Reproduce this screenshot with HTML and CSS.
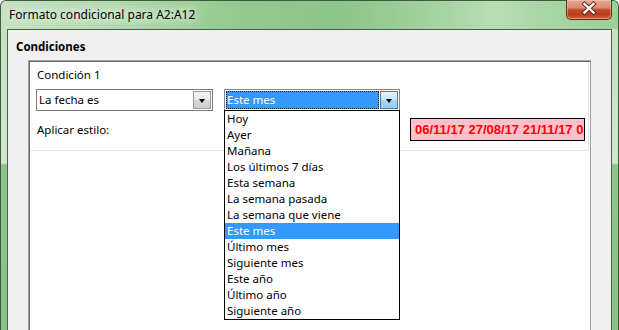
FILE: index.html
```html
<!DOCTYPE html>
<html lang="es">
<head>
<meta charset="utf-8">
<title>Formato condicional</title>
<link rel="stylesheet" href="styles.css">
</head>
<body>
<div class="window">
  <div class="titlebar">
    <span class="title">Formato condicional para A2:A12</span>
    <div class="close">
      <svg width="46" height="19" viewBox="0 0 46 19">
        <path d="M18.5 5 L27.5 13.5 M27.5 5 L18.5 13.5" stroke="#5a2418" stroke-width="4.2" stroke-linecap="square"/>
        <path d="M18.5 5 L27.5 13.5 M27.5 5 L18.5 13.5" stroke="#ffffff" stroke-width="2.4" stroke-linecap="square"/>
      </svg>
    </div>
  </div>
  <div class="client">
    <div class="section-title">Condiciones</div>
    <div class="pane">
      <div class="cond">
        <div class="cond-label">Condición 1</div>
        <div class="combo-row">
          <div class="combo">
            <span class="combo-text">La fecha es</span>
            <span class="combo-btn"><i class="arrow"></i></span>
          </div>
          <div class="combo combo-open">
            <span class="combo-text selected">Este mes</span>
            <span class="combo-btn hot"><i class="arrow"></i></span>
            <ul class="list">
              <li>Hoy</li>
              <li>Ayer</li>
              <li>Mañana</li>
              <li>Los últimos 7 días</li>
              <li>Esta semana</li>
              <li>La semana pasada</li>
              <li>La semana que viene</li>
              <li class="active">Este mes</li>
              <li>Último mes</li>
              <li>Siguiente mes</li>
              <li>Este año</li>
              <li>Último año</li>
              <li>Siguiente año</li>
            </ul>
          </div>
        </div>
        <div class="style-row">
          <span class="style-label">Aplicar estilo:</span>
          <div class="preview"><span class="preview-text">06/11/17 27/08/17 21/11/17 0</span></div>
        </div>
      </div>
    </div>
  </div>
</div>
</body>
</html>
```
FILE: styles.css
```css
html, body {
  margin: 0;
  padding: 0;
  width: 619px;
  height: 330px;
  overflow: hidden;
  background: #ffffff;
}

body {
  font-family: "Noto Sans", "Open Sans", sans-serif;
  font-size: 11.5px;
  color: #000;
}

.window {
  box-sizing: border-box;
  width: 619px;
  height: 330px;
  display: flex;
  flex-direction: column;
  border: 1px solid #3f5a3f;
  border-bottom: none;
  border-radius: 6px 6px 0 0;
  padding: 0 6px;
  background: linear-gradient(to bottom, #c2e1be 0, #cfe8cc 162px, #8bc688 164px, #88c485 100%);
}

.titlebar {
  height: 28px;
  margin: 0 -6px;
  padding: 0 6px;
  display: flex;
  align-items: flex-start;
  background: linear-gradient(90deg, #c4e2c0 0%, #b0d9ac 20%, #93c98f 38%, #8cc588 55%, #a0d09c 68%, #b8ddb4 80%, #a6d4a2 90%, #9ccf98 100%);
  border-radius: 6px 6px 0 0;
}

.title {
  padding: 6px 0 0 2px;
  line-height: 16px;
  font-size: 12px;
  color: #000;
  text-shadow: 0 0 6px #eaf5e8, 0 0 10px #eaf5e8, 0 0 14px #eaf5e8;
}

.close {
  margin-left: auto;
  margin-top: -1px;
  box-sizing: border-box;
  width: 46px;
  height: 20px;
  border: 1px solid #6b2a1c;
  border-top: none;
  border-radius: 0 0 5px 5px;
  background: linear-gradient(to bottom, #e9a996 0%, #dc8a72 40%, #c5492b 52%, #b93b1c 75%, #d3653f 100%);
  box-shadow: inset 0 0 0 1px rgba(255, 210, 190, 0.45);
}

.close svg {
  display: block;
  margin: -1px 0 0 -1px;
}

.client {
  flex: 1;
  display: flex;
  flex-direction: column;
  border: 1px solid #4b5e4b;
  border-bottom: none;
  background: #f0f0f0;
  min-height: 0;
}

.section-title {
  font-weight: bold;
  line-height: 16px;
  padding: 9px 0 0 8px;
  box-sizing: border-box;
  height: 30px;
}

.pane {
  flex: 1;
  margin: 0 20px;
  border-top: 1px solid #a0a0a0;
  border-left: 1px solid #a0a0a0;
  border-right: 1px solid #a0a0a0;
  padding: 1px 0 0 1px;
  background: #ffffff;
  box-shadow: inset 1px 1px 0 #696969;
}

.cond {
  box-sizing: border-box;
  height: 89px;
  margin-right: 1px;
  border-right: 1px solid #e3e3e3;
  border-bottom: 1px solid #e3e3e3;
  padding: 5px 0 0 6px;
}

.cond-label {
  line-height: 16px;
  padding-left: 1px;
}

.combo-row {
  display: flex;
  margin-top: 6px;
}

.combo {
  position: relative;
  box-sizing: border-box;
  width: 177px;
  height: 22px;
  border: 1px solid #7a7a7a;
  background: #fff;
  display: flex;
  align-items: center;
}

.combo-text {
  flex: 1;
  line-height: 16px;
  padding-left: 2px;
}

.combo-btn {
  box-sizing: border-box;
  width: 18px;
  height: 18px;
  margin-right: 1px;
  border: 1px solid #9a9a9a;
  background: linear-gradient(to bottom, #f4f4f4 0%, #e8e8e8 50%, #d8d8d8 51%, #cfcfcf 100%);
  display: flex;
  align-items: center;
  justify-content: center;
}

.arrow {
  width: 0;
  height: 0;
  border-left: 3.5px solid transparent;
  border-right: 3.5px solid transparent;
  border-top: 4px solid #000;
  margin-top: 1px;
}

.combo-open {
  width: 176px;
  margin-left: 11px;
  border-color: #6d8bab;
}

.combo-text.selected {
  margin: 0 1px 0 1px;
  height: 18px;
  box-sizing: border-box;
  background: #3399ff;
  color: #fff;
  padding-left: 1px;
  outline: 1px dotted #1a1a1a;
  outline-offset: -1px;
  line-height: 17px;
}

.combo-btn.hot {
  border-color: #3c7fb1;
  background: linear-gradient(to bottom, #e5f3fd 0%, #c7e5fb 50%, #a9d7f8 51%, #9ccbf0 100%);
}

.list {
  position: absolute;
  top: 100%;
  left: -1px;
  width: 176px;
  box-sizing: border-box;
  margin: 0;
  padding: 0;
  list-style: none;
  border: 1px solid #000;
  background: #fff;
  z-index: 5;
}

.list li {
  height: 16px;
  line-height: 16px;
  padding-left: 2px;
  white-space: nowrap;
}

.list li.active {
  background: #3399ff;
  color: #fff;
}

.style-row {
  display: flex;
  align-items: center;
  margin-top: 7px;
}

.style-label {
  padding-left: 1px;
  line-height: 16px;
}

.preview {
  margin-left: auto;
  margin-right: 3px;
  box-sizing: border-box;
  width: 175px;
  height: 23px;
  border: 1px solid #000;
  background: #ffc0cb;
  overflow: hidden;
  white-space: nowrap;
}

.preview-text {
  display: block;
  font-family: "Liberation Sans", Arial, sans-serif;
  font-weight: bold;
  font-size: 13px;
  line-height: 21px;
  color: #ff0000;
  padding-left: 4px;
}
```
